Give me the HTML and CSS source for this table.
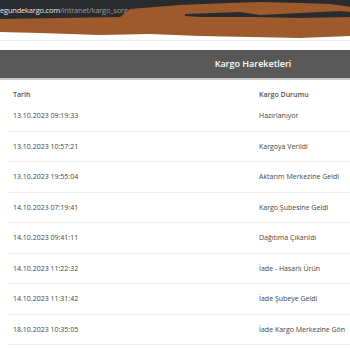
FILE: index.html
```html
<!DOCTYPE html>
<html lang="tr">
<head>
<meta charset="utf-8">
<link rel="stylesheet" href="styles.css">
</head>
<body>
<div class="browser">
  <div class="urlbar"><span class="domain">egundekargo.com</span><span class="path">/intranet/kargo_sorg</span></div>
  <svg class="scribble" width="350" height="40" viewBox="0 0 350 40">
    <path d="M0 19 L120 17 L130 9 L180 5 L230 3 L260 2 L300 3 L330 4 L345 6 L350 7 L350 36 L300 38 L250 37 L200 36 L150 34 L100 35 L40 33 L0 32 Z" fill="#9d5a2c"/>
    <path d="M185 14 L240 12 L260 15 L300 13 L340 11 L350 12 L350 17 L300 18 L255 17 L200 17 L185 16 Z" fill="#2a2b2e"/>
  </svg>
</div>
<div class="gap"></div>
<div class="panel">
  <div class="panel-head">Kargo Hareketleri</div>
  <div class="table">
    <div class="row head"><div class="c1">Tarih</div><div class="c2">Kargo Durumu</div></div>
    <div class="row"><div class="c1">13.10.2023 09:19:33</div><div class="c2">Hazırlanıyor</div></div>
    <div class="row"><div class="c1">13.10.2023 10:57:21</div><div class="c2">Kargoya Verildi</div></div>
    <div class="row"><div class="c1">13.10.2023 19:55:04</div><div class="c2">Aktarım Merkezine Geldi</div></div>
    <div class="row"><div class="c1">14.10.2023 07:19:41</div><div class="c2">Kargo Şubesine Geldi</div></div>
    <div class="row"><div class="c1">14.10.2023 09:41:11</div><div class="c2">Dağıtıma Çıkarıldı</div></div>
    <div class="row"><div class="c1">14.10.2023 11:22:32</div><div class="c2">İade - Hasarlı Ürün</div></div>
    <div class="row"><div class="c1">14.10.2023 11:31:42</div><div class="c2">İade Şubeye Geldi</div></div>
    <div class="row"><div class="c1">18.10.2023 10:35:05</div><div class="c2">İade Kargo Merkezine Gön</div></div>
  </div>
</div>
</body>
</html>
```
FILE: styles.css
```css
html, body { margin: 0; padding: 0; background: #fff; overflow: hidden; }
body { width: 350px; height: 350px; font-family: "Open Sans", "Noto Sans", sans-serif; }
.browser { position: relative; height: 35px; background: #fff; }
.urlbar { height: 20px; background: #2a2b2e; color: #e8e8e8; font-size: 7.5px; line-height: 20px; white-space: nowrap; letter-spacing: -0.2px; }
.urlbar .path { color: #9a9a9a; }
.scribble { position: absolute; left: 0; top: 0; }
.gap { margin-top: 5px; height: 10px; border-top: 1px solid #ececec; box-sizing: border-box; }
.panel { width: 506px; }
.panel-head { height: 28px; background: #585858; color: #fff; font-size: 9px; font-weight: 600; text-align: center; line-height: 28px; border-bottom: 2px solid #c9c9c9; }
.table { margin-left: 8px; }
.row { display: flex; height: 30.5px; align-items: center; border-bottom: 1px solid #efefef; box-sizing: border-box; color: #444; font-size: 7px; }
.row.head { height: 21px; align-items: flex-end; padding-bottom: 2px; font-weight: 600; color: #505050; border-bottom: none; }
.c1 { width: 251px; padding-left: 5px; box-sizing: border-box; flex: none; }
.c2 { white-space: nowrap; }
```
